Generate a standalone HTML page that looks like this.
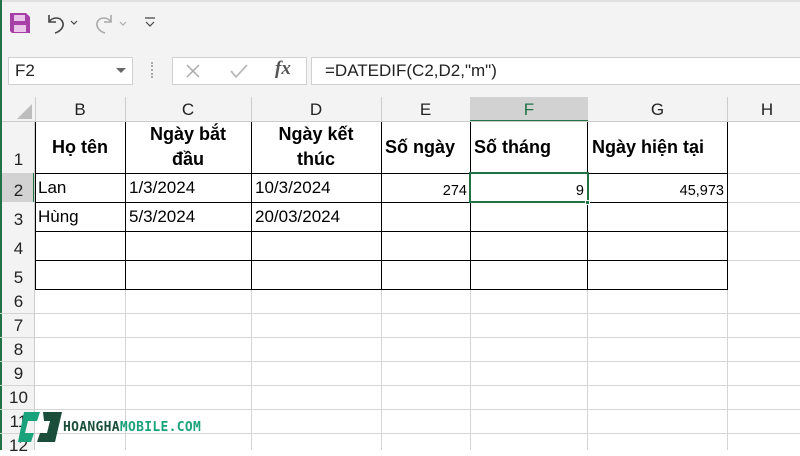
<!DOCTYPE html>
<html><head><meta charset="utf-8"><style>
*{margin:0;padding:0;box-sizing:border-box}
body{width:800px;height:450px;overflow:hidden;background:#fff;font-family:"Segoe UI","Liberation Sans","DejaVu Sans",sans-serif;position:relative;color:#000}
.a{position:absolute}
.t{white-space:nowrap}
.hl{position:absolute;height:1px;background:#d4d4d4}
.vl{position:absolute;width:1px;background:#d4d4d4}
.bh{position:absolute;height:1px;background:#000}
.bv{position:absolute;width:1px;background:#000}
.ch{position:absolute;top:97px;height:25px;text-align:center;font-size:17px;line-height:25px;color:#222}
.rh{position:absolute;left:2px;width:33px;text-align:center;font-size:17px;color:#222}
.hd{position:absolute;font-weight:bold;font-size:18px;text-align:center;line-height:25px}
.d{position:absolute;font-size:17px;line-height:20px}
.n{position:absolute;font-size:14.5px;text-align:right;line-height:18px}
</style></head><body>
<div class="a" style="left:0;top:0;width:800px;height:46px;background:#f3f3f3"></div>
<div class="a" style="left:0;top:46px;width:800px;height:51px;background:#f3f3f3"></div>
<div class="a" style="left:0;top:0;width:800px;height:2px;background:#e0e0e0"></div>
<svg class="a" style="left:9px;top:12px" width="22" height="22" viewBox="0 0 22 22"><path d="M1 1h16l4 4v16H3l-2-2z" fill="#a63fa6"/><rect x="5" y="3" width="11" height="6" fill="#e9c6e9"/><rect x="5" y="13" width="12" height="7" fill="#e9c6e9"/></svg>
<svg class="a" style="left:44px;top:12px" width="40" height="22" viewBox="0 0 40 22"><path d="M5 3v7h7" fill="none" stroke="#444" stroke-width="1.6"/><path d="M5 10c3-5 12-6 14 1c1 5-4 9-8 10" fill="none" stroke="#444" stroke-width="1.6"/><path d="M27 9l3 3l3-3" fill="none" stroke="#444" stroke-width="1.2"/></svg>
<svg class="a" style="left:92px;top:12px" width="40" height="22" viewBox="0 0 40 22"><path d="M19 3v7h-7" fill="none" stroke="#aaa" stroke-width="1.6"/><path d="M19 10c-3-5-12-6-14 1c-1 5 4 9 8 10" fill="none" stroke="#aaa" stroke-width="1.6"/><path d="M28 10l3 3l3-3" fill="none" stroke="#aaa" stroke-width="1.2"/></svg>
<svg class="a" style="left:144px;top:16px" width="12" height="12" viewBox="0 0 12 12"><path d="M1 2h10M2 6l4 4l4-4" fill="none" stroke="#444" stroke-width="1.2"/></svg>
<div class="a" style="left:8px;top:57px;width:125px;height:28px;background:#fff;border:1px solid #d0d0d0"></div>
<div class="a t" style="left:15px;top:61px;font-size:17px;color:#222">F2</div>
<svg class="a" style="left:116px;top:68px" width="10" height="6"><path d="M0 0h10L5 5z" fill="#666"/></svg>
<div class="a" style="left:151px;top:62px;width:2px;height:16px;border-left:2px dotted #aaa"></div>
<div class="a" style="left:172px;top:57px;width:135px;height:28px;background:#fff;border:1px solid #d0d0d0"></div>
<svg class="a" style="left:185px;top:63px" width="16" height="16"><path d="M2 2l12 12M14 2L2 14" stroke="#aaa" stroke-width="1.5"/></svg>
<svg class="a" style="left:230px;top:63px" width="18" height="16"><path d="M1 8l5 6L17 2" fill="none" stroke="#bbb" stroke-width="1.8"/></svg>
<div class="a t" style="left:275px;top:58px;font-family:'Liberation Serif',serif;font-style:italic;font-weight:bold;font-size:19px;color:#555">fx</div>
<div class="a" style="left:311px;top:57px;width:489px;height:28px;background:#fff;border:1px solid #d0d0d0;border-right:none"></div>
<div class="a t" style="left:325px;top:61px;font-size:17px;color:#222">=DATEDIF(C2,D2,"m")</div>
<div class="a" style="left:0;top:97px;width:800px;height:25px;background:#f3f3f3"></div>
<div class="a" style="left:470px;top:97px;width:118px;height:25px;background:#d2d2d2"></div>
<div class="a" style="left:470px;top:120px;width:118px;height:2px;background:#217346"></div>
<svg class="a" style="left:14px;top:102px" width="20" height="18"><path d="M18 2V17H3z" fill="#bdbdbd"/></svg>
<div class="ch" style="left:35px;width:90px">B</div>
<div class="ch" style="left:125px;width:126px">C</div>
<div class="ch" style="left:251px;width:130px">D</div>
<div class="ch" style="left:381px;width:89px">E</div>
<div class="ch" style="left:470px;width:118px;color:#217346">F</div>
<div class="ch" style="left:588px;width:139px">G</div>
<div class="ch" style="left:727px;width:80px">H</div>
<div class="vl" style="left:35px;top:97px;height:25px;background:#ccc"></div>
<div class="vl" style="left:125px;top:97px;height:25px;background:#ccc"></div>
<div class="vl" style="left:251px;top:97px;height:25px;background:#ccc"></div>
<div class="vl" style="left:381px;top:97px;height:25px;background:#ccc"></div>
<div class="vl" style="left:727px;top:97px;height:25px;background:#ccc"></div>
<div class="hl" style="left:0;top:121px;width:800px;background:#ccc"></div>
<div class="a" style="left:0;top:122px;width:35px;height:328px;background:#f3f3f3"></div>
<div class="a" style="left:0;top:173px;width:35px;height:29px;background:#d2d2d2"></div>
<div class="a" style="left:33px;top:173px;width:2px;height:29px;background:#217346"></div>
<div class="a" style="left:0;top:0;width:2px;height:450px;background:#217346"></div>
<div class="vl" style="left:34px;top:122px;height:328px;background:#ccc"></div>
<div class="rh" style="top:150px">1</div>
<div class="rh" style="top:181px">2</div>
<div class="rh" style="top:210px">3</div>
<div class="rh" style="top:239px">4</div>
<div class="rh" style="top:268px">5</div>
<div class="rh" style="top:292px">6</div>
<div class="rh" style="top:316px">7</div>
<div class="rh" style="top:340px">8</div>
<div class="rh" style="top:364px">9</div>
<div class="rh" style="top:388px">10</div>
<div class="rh" style="top:412px">11</div>
<div class="rh" style="top:436px">12</div>
<div class="hl" style="left:0;top:313px;width:800px"></div>
<div class="hl" style="left:0;top:337px;width:800px"></div>
<div class="hl" style="left:0;top:361px;width:800px"></div>
<div class="hl" style="left:0;top:385px;width:800px"></div>
<div class="hl" style="left:0;top:409px;width:800px"></div>
<div class="hl" style="left:0;top:433px;width:800px"></div>
<div class="hl" style="left:727px;top:173px;width:73px"></div>
<div class="hl" style="left:727px;top:202px;width:73px"></div>
<div class="hl" style="left:727px;top:231px;width:73px"></div>
<div class="hl" style="left:727px;top:260px;width:73px"></div>
<div class="vl" style="left:125px;top:289px;height:161px"></div>
<div class="vl" style="left:251px;top:289px;height:161px"></div>
<div class="vl" style="left:381px;top:289px;height:161px"></div>
<div class="vl" style="left:470px;top:289px;height:161px"></div>
<div class="vl" style="left:587px;top:289px;height:161px"></div>
<div class="vl" style="left:727px;top:289px;height:161px"></div>
<div class="bh" style="left:35px;top:173px;width:693px"></div>
<div class="bh" style="left:35px;top:202px;width:693px"></div>
<div class="bh" style="left:35px;top:231px;width:693px"></div>
<div class="bh" style="left:35px;top:260px;width:693px"></div>
<div class="bh" style="left:35px;top:289px;width:693px"></div>
<div class="bv" style="left:35px;top:122px;height:168px"></div>
<div class="bv" style="left:125px;top:122px;height:168px"></div>
<div class="bv" style="left:251px;top:122px;height:168px"></div>
<div class="bv" style="left:381px;top:122px;height:168px"></div>
<div class="bv" style="left:470px;top:122px;height:168px"></div>
<div class="bv" style="left:587px;top:122px;height:168px"></div>
<div class="bv" style="left:727px;top:122px;height:168px"></div>
<div class="hd" style="left:35px;width:90px;top:135px">Họ tên</div>
<div class="hd" style="left:125px;width:126px;top:122px">Ngày bắt<br>đầu</div>
<div class="hd" style="left:251px;width:130px;top:122px">Ngày kết<br>thúc</div>
<div class="hd t" style="left:385px;top:135px">Số ngày</div>
<div class="hd t" style="left:474px;top:135px">Số tháng</div>
<div class="hd t" style="left:592px;top:135px">Ngày hiện tại</div>
<div class="d t" style="left:38px;top:178px">Lan</div>
<div class="d t" style="left:129px;top:178px">1/3/2024</div>
<div class="d t" style="left:255px;top:178px">10/3/2024</div>
<div class="d t" style="left:38px;top:207px">Hùng</div>
<div class="d t" style="left:129px;top:207px">5/3/2024</div>
<div class="d t" style="left:255px;top:207px">20/03/2024</div>
<div class="n t" style="left:381px;width:86px;top:182px">274</div>
<div class="n t" style="left:588px;width:136px;top:182px">45,973</div>
<div class="a" style="left:469px;top:172px;width:120px;height:31px;border:2px solid #217346"></div>
<div class="a" style="left:585px;top:200px;width:5px;height:5px;background:#217346;border:1px solid #fff"></div>
<div class="n t" style="left:470px;width:114px;top:182px">9</div>
<svg class="a" style="left:18px;top:412px" width="44" height="38" viewBox="0 0 44 38"><path d="M6 0h16l-3 9h-9l-3 12h9l-3 9H0z" fill="#1aa37a"/><path d="M25 0h19l-7 30H19l3-9h7l3-12h-6z" fill="#1a4d3a"/></svg>
<div class="a t" style="left:63px;top:420px;font-size:13px;font-weight:bold;letter-spacing:0.3px;font-family:'DejaVu Sans Mono','Liberation Mono',monospace"><span style="color:#1a4d3a">HOANGHA</span><span style="color:#1aa37a">MOBILE.COM</span></div>
</body></html>
